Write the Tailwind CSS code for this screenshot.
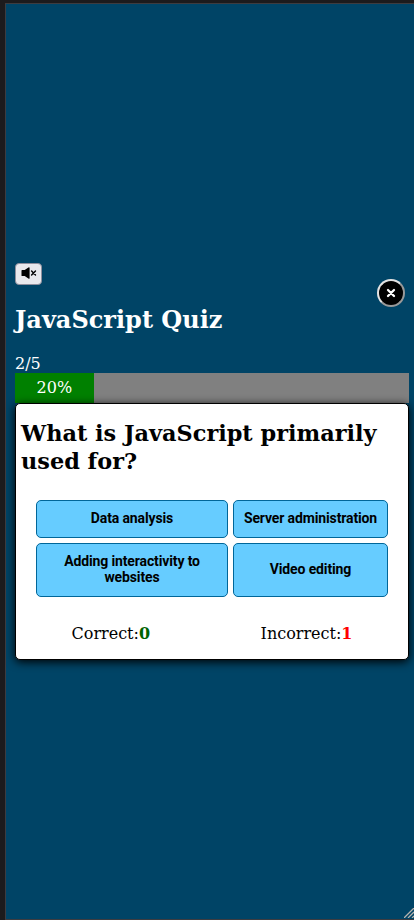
<!DOCTYPE html>
<html lang="en">
<head>
<meta charset="utf-8">
<meta name="viewport" content="width=device-width">
<title>JavaScript Quiz</title>
<script src="https://cdn.jsdelivr.net/npm/@tailwindcss/browser@4"></script>
</head>
<body class="h-[920px] overflow-hidden bg-[#1c1b1d] pt-[3px] pl-[5px] font-['DejaVu_Serif',serif] text-base">
<main class="relative h-[917px] border-t border-b border-l border-[#3d3c40] bg-[#004466] pt-[259px] pr-[5px] pl-[9px] text-white">
  <button aria-label="Muted" class="flex h-[22px] w-[27px] items-center justify-center rounded-[4px] border border-[#8f8f9d] bg-[#e9e9ed]">
    <svg class="-mt-0.5 h-3 w-4" viewBox="0 0 16 12"><path d="M.5 3.6Q.5 3 1.1 3H3.7L7.4.4Q8.6-.3 8.6 1V11Q8.6 12.3 7.4 11.6L3.7 9H1.1Q.5 9 .5 8.4Z" fill="#000"/><path d="M10.6 4L14.5 8M14.5 4L10.6 8" stroke="#000" stroke-width="1.4" stroke-linecap="round"/></svg>
  </button>
  <button aria-label="Close" class="absolute top-[275px] left-[371px] flex size-7 items-center justify-center rounded-full border-2 border-t-[#e3e3e3] border-l-[#e3e3e3] border-r-[#999] border-b-[#999] bg-black">
    <svg class="size-[10px]" viewBox="0 0 10 10"><path d="M2 2L8 8M8 2L2 8" stroke="#fff" stroke-width="2.3" stroke-linecap="round"/></svg>
  </button>
  <h1 class="mt-[21px] text-[24px] leading-7 font-bold">JavaScript Quiz</h1>
  <p class="mt-5 h-[19px] leading-[19px]">2/5</p>
  <div class="h-[30px] bg-[#808080]">
    <div class="flex h-full items-center justify-center bg-[#008000] leading-[30px]" style="width:20%">20%</div>
  </div>
  <section class="relative h-[257px] rounded-[5px] border border-black bg-white px-[5px] pt-[15px] text-black shadow-[0_2px_10px_#000]">
    <h2 class="text-[22.4px] leading-7 font-bold">What is JavaScript primarily used for?</h2>
    <div class="mt-[25px] ml-[15px] grid w-[352px] grid-cols-[192px_155px] grid-rows-[38px_54px] gap-[5px] font-['Roboto',sans-serif] text-[14px] leading-4 font-bold tracking-[-0.13px]">
      <button class="rounded-[5px] border border-[#006699] bg-[#66ccff] pb-0.5">Data analysis</button>
      <button class="rounded-[5px] border border-[#006699] bg-[#66ccff] pb-0.5 whitespace-nowrap">Server administration</button>
      <button class="rounded-[5px] border border-[#006699] bg-[#66ccff] px-5 pb-0.5">Adding interactivity to<br>websites</button>
      <button class="rounded-[5px] border border-[#006699] bg-[#66ccff] pb-0.5">Video editing</button>
    </div>
    <div class="mt-[27px] flex justify-between px-[50.5px] leading-[19px]">
      <p>Correct:<b class="text-[#006400]">0</b></p>
      <p>Incorrect:<b class="text-[#ff0000]">1</b></p>
    </div>
  </section>
  <svg class="absolute right-0 bottom-px h-[10px] w-[10px]" viewBox="0 0 10 10"><path d="M0 10L10 0M4 10L10 4M8 10L10 8" stroke="#b5b2ae" stroke-width="1.3"/></svg>
</main>
</body>
</html>
